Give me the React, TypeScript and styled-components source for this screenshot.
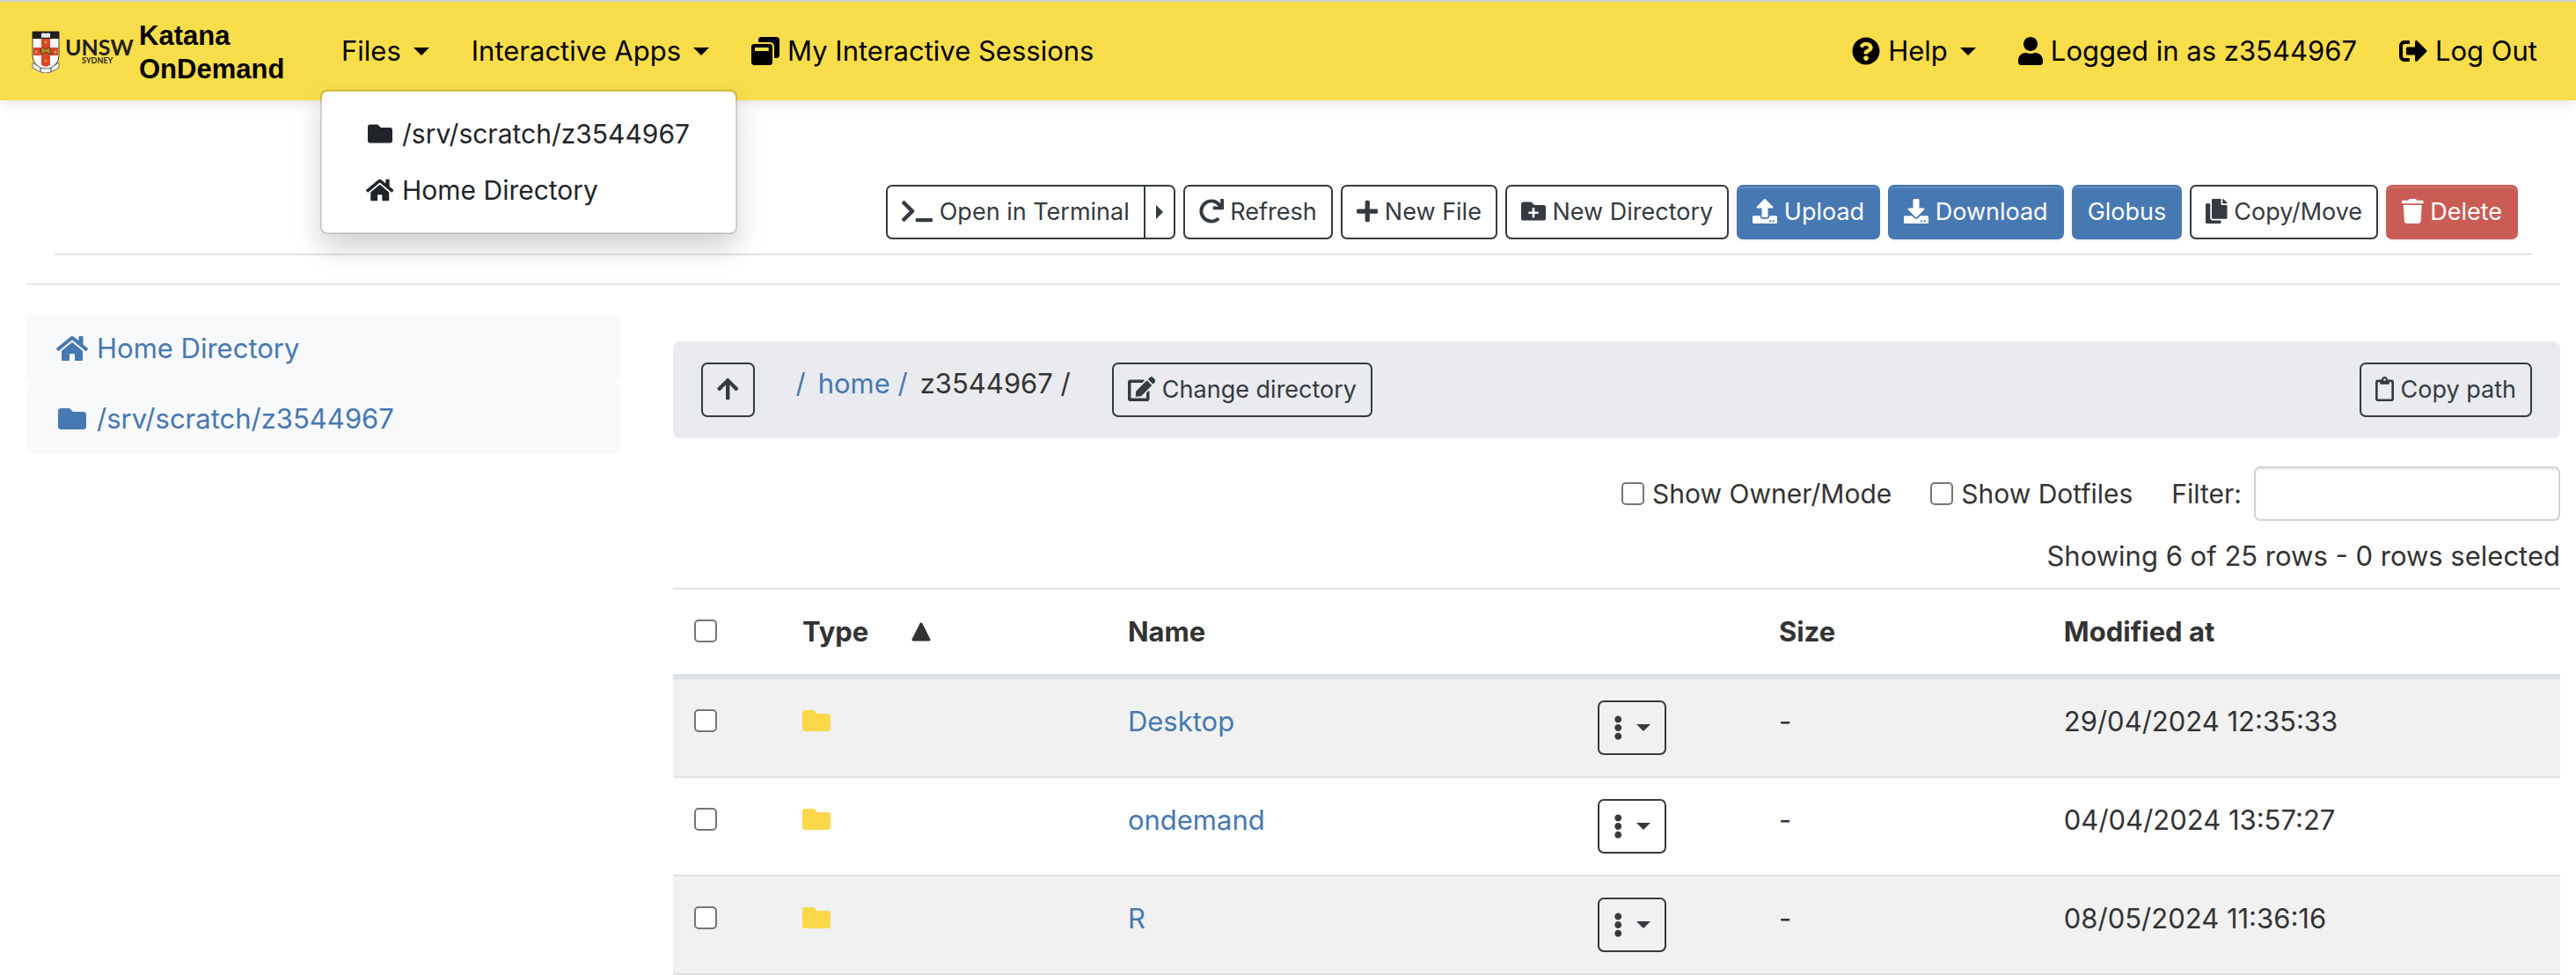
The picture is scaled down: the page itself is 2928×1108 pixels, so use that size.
import React from "react";
import styled, { createGlobalStyle, css } from "styled-components";
import { IconContext } from "react-icons";
import {
  FaArrowUp,
  FaCopy,
  FaDownload,
  FaEdit,
  FaEllipsisV,
  FaFolder,
  FaFolderPlus,
  FaHome,
  FaPlus,
  FaQuestionCircle,
  FaRedo,
  FaRegClipboard,
  FaSignOutAlt,
  FaTerminal,
  FaTrash,
  FaUpload,
  FaUser,
  FaWindowRestore,
} from "react-icons/fa";

const color = {
  brand: "#f9dd4a",
  link: "#4678b2",
  danger: "#c95c54",
  text: "#333333",
  dark: "#343a40",
  line: "#dee2e6",
  folder: "#fad84a",
};

const GlobalStyle = createGlobalStyle`
  *, *::before, *::after { box-sizing: border-box; }
  body {
    margin: 0;
    background: #fff;
    color: ${color.text};
    font-family: Inter, "Liberation Sans", sans-serif;
    font-size: 31px;
    line-height: 48px;
  }
  svg { height: 1em; width: auto; vertical-align: -0.125em; }
  a { text-decoration: none; }
`;

const Navbar = styled.nav`
  display: flex;
  align-items: center;
  height: 114px;
  padding: 0 20px 0 36px;
  border-top: 2px solid #cfcfcf;
  background: ${color.brand};
  box-shadow: 0 4px 12px rgba(0, 0, 0, 0.1);
`;

const Brand = styled.a`
  display: flex;
  align-items: center;
  gap: 4px;
  width: 328px;
  color: #000;
  font: bold 31px/38px "Liberation Sans", Arial, sans-serif;
`;

const BrandName = styled.span`
  padding-top: 4px;
`;

const Logo = styled.svg`
  width: 118px;
  height: 50px;
  flex: none;
`;

const NavList = styled.ul`
  display: flex;
  margin: 0;
  padding: 0;
  list-style: none;
`;

const RightNavList = styled(NavList)`
  margin-left: auto;
`;

const NavItem = styled.li`
  position: relative;
`;

const navLink = css`
  display: flex;
  align-items: center;
  gap: 9px;
  padding: 16px 24px;
  border: 0;
  background: none;
  color: #000;
  font: inherit;
  white-space: nowrap;
  svg { font-size: 32px; }
`;

const NavLink = styled.a`
  ${navLink}
`;

const NavToggle = styled.button`
  ${navLink}
`;

const Caret = styled.span<{ $size?: number; $gap?: number }>`
  flex: none;
  display: inline-block;
  margin-left: ${(p) => p.$gap ?? 5}px;
  border: ${(p) => p.$size ?? 9}px solid transparent;
  border-top-color: currentColor;
  border-bottom-width: 0;
`;

const SideCaret = styled.span`
  display: block;
  border: 8px solid transparent;
  border-left-color: currentColor;
  border-right-width: 0;
`;

const Dropdown = styled.ul`
  position: absolute;
  z-index: 10;
  top: 100%;
  left: 0;
  min-width: 474px;
  margin: 4px 0 0;
  padding: 16px 0;
  border: 2px solid rgba(0, 0, 0, 0.15);
  border-radius: 8px;
  background: #fff;
  background-clip: padding-box;
  box-shadow: 0 16px 32px rgba(0, 0, 0, 0.175);
  font-size: 30px;
  list-style: none;
`;

const DropdownLink = styled.a`
  display: flex;
  align-items: center;
  gap: 8px;
  padding: 8px 48px;
  color: #212529;
  white-space: nowrap;
`;

const FixedIcon = styled.span<{ $small?: boolean }>`
  display: flex;
  justify-content: center;
  width: ${(p) => (p.$small ? 35 : 40)}px;
  font-size: ${(p) => (p.$small ? 28 : 32)}px;
`;

const Page = styled.div`
  padding: 96px 18px 0 30px;
`;

const Toolbar = styled.div`
  display: flex;
  justify-content: flex-end;
  gap: 9px;
  margin: 0 32px;
  padding: 0 16px 16px;
  border-bottom: 2px solid ${color.line};
`;

const Button = styled.button<{ $tone?: "primary" | "danger" }>`
  padding: 8px 16px;
  border: 2px solid ${color.dark};
  border-radius: 7px;
  background: transparent;
  color: ${color.dark};
  font: inherit;
  font-size: 27px;
  line-height: 42px;
  white-space: nowrap;
  svg { font-size: 28px; }
  ${(p) =>
    p.$tone &&
    css`
      border-color: ${color[p.$tone === "primary" ? "link" : "danger"]};
      background: ${color[p.$tone === "primary" ? "link" : "danger"]};
      color: #fff;
      box-shadow: inset 0 2px 0 rgba(255, 255, 255, 0.15), 0 2px 2px rgba(0, 0, 0, 0.075);
    `}
`;

const ButtonGroup = styled.div`
  display: flex;
  & > button:first-child { border-radius: 7px 0 0 7px; }
  & > button:last-child {
    margin-left: -2px;
    padding: 8px 12px;
    border-radius: 0 7px 7px 0;
  }
`;

const Divider = styled.hr`
  margin: 32px 0;
  border: 0;
  border-top: 2px solid #e5e5e5;
`;

const Columns = styled.div`
  display: grid;
  grid-template-columns: minmax(0, 45fr) minmax(0, 143fr);
  gap: 60px;
  align-items: start;
`;

const SideNav = styled.nav`
  display: flex;
  flex-direction: column;
`;

const SideLink = styled.a`
  display: flex;
  align-items: center;
  gap: 8px;
  padding: 16px 32px;
  border-radius: 8px;
  background: #f8f9fb;
  color: ${color.link};
`;

const Main = styled.main`
  padding-top: 32px;
`;

const PathBar = styled.div`
  display: flex;
  align-items: flex-start;
  padding: 24px 32px;
  border-radius: 8px;
  background: #eaebef;
`;

const Crumbs = styled.ol`
  display: flex;
  gap: 14px;
  margin: 0;
  padding: 0 47px;
  list-style: none;
  white-space: pre;
  a { color: ${color.link}; }
`;

const PushRight = styled.div`
  margin-left: auto;
`;

const Options = styled.div`
  display: flex;
  justify-content: flex-end;
  align-items: center;
  gap: 44px;
  padding: 32px 0 16px;
  font-size: 30px;
`;

const CheckLabel = styled.label`
  display: flex;
  align-items: center;
  gap: 9px;
`;

const Checkbox = styled.input.attrs({ type: "checkbox" })`
  appearance: none;
  display: block;
  width: 26px;
  height: 26px;
  margin: 0;
  border: 2px solid #767676;
  border-radius: 5px;
  background: #fff;
`;

const FilterLabel = styled.label`
  display: flex;
  align-items: center;
  gap: 14px;
`;

const FilterInput = styled.input`
  width: 348px;
  height: 62px;
  padding: 8px 16px;
  border: 2px solid #ced4da;
  border-radius: 7px;
  background: #fff;
  box-shadow: inset 0 2px 2px rgba(0, 0, 0, 0.075);
  font: inherit;
`;

const Status = styled.p`
  margin: 0 0 12px;
  text-align: right;
`;

const Table = styled.table`
  width: 100%;
  table-layout: fixed;
  border-collapse: separate;
  border-spacing: 0;
  border-top: 2px solid ${color.line};
`;

const Col = styled.col<{ $share: number }>`
  width: ${(p) => p.$share}%;
`;

const HeadCell = styled.th`
  padding: 24px;
  border-bottom: 6px solid ${color.line};
  text-align: left;
  vertical-align: top;
  font-weight: 700;
  svg { height: 22px; margin-left: 49px; vertical-align: 0; }
`;

const Row = styled.tr`
  &:nth-child(odd) { background: #f1f1f1; }
`;

const Cell = styled.td`
  padding: 24px;
  border-bottom: 2px solid ${color.line};
  vertical-align: top;
  a { color: ${color.link}; }
`;

const CheckSlot = styled.div`
  padding-top: 10px;
`;

const FolderIcon = styled(FaFolder)`
  color: ${color.folder};
  font-size: 32px;
`;

const MenuButton = styled(Button)`
  display: flex;
  align-items: center;
  height: 62px;
`;

const Shield = () => (
  <Logo viewBox="0 0 118 50" role="img" aria-label="UNSW Sydney">
    <path d="M1 3h30v28q0 10-15 16Q1 41 1 31z" fill="#fff" stroke="#3a352a" />
    <path d="M1 3h30v8H1z" fill="#231f20" />
    <path d="M11 5q2-1 5 0 3-1 5 0v5q-2-1-5 0-3-1-5 0z" fill="#e8e8e8" />
    <path d="M11 11h10v10h9v9h-9v11l-5 2-5-2V30H2v-9h9z" fill="#d9472b" />
    <path d="M10 23q3-4 5 0l5-2q3 2 1 4l2 3h-4l-3-2-4 3-1-3z" fill="#b5862a" stroke="#4a3a12" />
    <circle cx="16" cy="15" r="1.500" fill="#d9a52b" />
    <circle cx="16" cy="36" r="1.500" fill="#d9a52b" />
    <circle cx="5" cy="26" r="1.500" fill="#d9a52b" />
    <circle cx="27" cy="26" r="1.500" fill="#d9a52b" />
    <path d="M1 38l9 6v5l-9-5zM31 38l-9 6v5l9-5zM10 44q6 2 12 0v5q-6 2-12 0z" fill="#f4f4f4" stroke="#77736a" />
    <text x="38" y="30" fontFamily="Lato, sans-serif" fontSize="25" fill="#231f20">UNSW</text>
    <text x="57" y="39" fontFamily="Lato, sans-serif" fontSize="9" fill="#231f20">SYDNEY</text>
  </Logo>
);

const SortedAscending = () => (
  <svg viewBox="0 0 22 22" role="img" aria-label="sorted ascending">
    <path d="M11 2L20 20H2z" fill="currentColor" stroke="currentColor" strokeWidth="3" strokeLinejoin="round" />
  </svg>
);

const files = [
  { name: "Desktop", size: "-", modified: "29/04/2024 12:35:33" },
  { name: "ondemand", size: "-", modified: "04/04/2024 13:57:27" },
  { name: "R", size: "-", modified: "08/05/2024 11:36:16" },
];

// Percentage sizes keep each glyph's own width instead of a square box.
const iconDefaults = { size: "100%" };

export default function App() {
  return (
    <IconContext.Provider value={iconDefaults}>
      <GlobalStyle />
      <Navbar>
        <Brand href="#">
          <Shield />
          <BrandName>Katana<br />OnDemand</BrandName>
        </Brand>
        <NavList>
          <NavItem>
            <NavToggle aria-expanded="true">Files<Caret /></NavToggle>
            <Dropdown>
              <li>
                <DropdownLink href="#"><FixedIcon $small><FaFolder /></FixedIcon>/srv/scratch/z3544967</DropdownLink>
              </li>
              <li>
                <DropdownLink href="#"><FixedIcon $small><FaHome /></FixedIcon>Home Directory</DropdownLink>
              </li>
            </Dropdown>
          </NavItem>
          <NavItem><NavToggle>Interactive Apps<Caret /></NavToggle></NavItem>
          <NavItem><NavLink href="#"><FaWindowRestore />My Interactive Sessions</NavLink></NavItem>
        </NavList>
        <RightNavList>
          <NavItem><NavToggle><FaQuestionCircle />Help<Caret /></NavToggle></NavItem>
          <NavItem><NavLink href="#"><FaUser />Logged in as z3544967</NavLink></NavItem>
          <NavItem><NavLink href="#"><FaSignOutAlt />Log Out</NavLink></NavItem>
        </RightNavList>
      </Navbar>

      <Page>
        <Toolbar>
          <ButtonGroup>
            <Button><FaTerminal /> Open in Terminal</Button>
            <Button aria-label="More terminals"><SideCaret /></Button>
          </ButtonGroup>
          <Button><FaRedo /> Refresh</Button>
          <Button><FaPlus /> New File</Button>
          <Button><FaFolderPlus /> New Directory</Button>
          <Button $tone="primary"><FaUpload /> Upload</Button>
          <Button $tone="primary"><FaDownload /> Download</Button>
          <Button $tone="primary">Globus</Button>
          <Button><FaCopy /> Copy/Move</Button>
          <Button $tone="danger"><FaTrash /> Delete</Button>
        </Toolbar>
        <Divider />

        <Columns>
          <SideNav>
            <SideLink href="#"><FixedIcon><FaHome /></FixedIcon>Home Directory</SideLink>
            <SideLink href="#"><FixedIcon><FaFolder /></FixedIcon>/srv/scratch/z3544967</SideLink>
          </SideNav>

          <Main>
            <PathBar>
              <Button aria-label="Parent directory"><FaArrowUp /></Button>
              <Crumbs>
                <li><a href="#">/</a></li>
                <li><a href="#">home /</a></li>
                <li>z3544967 /</li>
              </Crumbs>
              <Button><FaEdit /> Change directory</Button>
              <PushRight>
                <Button><FaRegClipboard /> Copy path</Button>
              </PushRight>
            </PathBar>

            <Options>
              <CheckLabel><Checkbox />Show Owner/Mode</CheckLabel>
              <CheckLabel><Checkbox />Show Dotfiles</CheckLabel>
              <FilterLabel>Filter:<FilterInput type="text" /></FilterLabel>
            </Options>
            <Status>Showing 6 of 25 rows - 0 rows selected</Status>

            <Table>
              <colgroup>
                <Col $share={5.73} />
                <Col $share={17.25} />
                <Col $share={24.9} />
                <Col $share={9.6} />
                <Col $share={15.1} />
                <Col $share={27.42} />
              </colgroup>
              <thead>
                <tr>
                  <HeadCell><CheckSlot><Checkbox aria-label="Select all" /></CheckSlot></HeadCell>
                  <HeadCell>Type<SortedAscending /></HeadCell>
                  <HeadCell>Name</HeadCell>
                  <HeadCell />
                  <HeadCell>Size</HeadCell>
                  <HeadCell>Modified at</HeadCell>
                </tr>
              </thead>
              <tbody>
                {files.map((file) => (
                  <Row key={file.name}>
                    <Cell><CheckSlot><Checkbox aria-label={`Select ${file.name}`} /></CheckSlot></Cell>
                    <Cell><FolderIcon title="directory" /></Cell>
                    <Cell><a href="#">{file.name}</a></Cell>
                    <Cell><MenuButton aria-label={`Actions for ${file.name}`}><FaEllipsisV /><Caret $size={8} $gap={15} /></MenuButton></Cell>
                    <Cell>{file.size}</Cell>
                    <Cell>{file.modified}</Cell>
                  </Row>
                ))}
              </tbody>
            </Table>
          </Main>
        </Columns>
      </Page>
    </IconContext.Provider>
  );
}
